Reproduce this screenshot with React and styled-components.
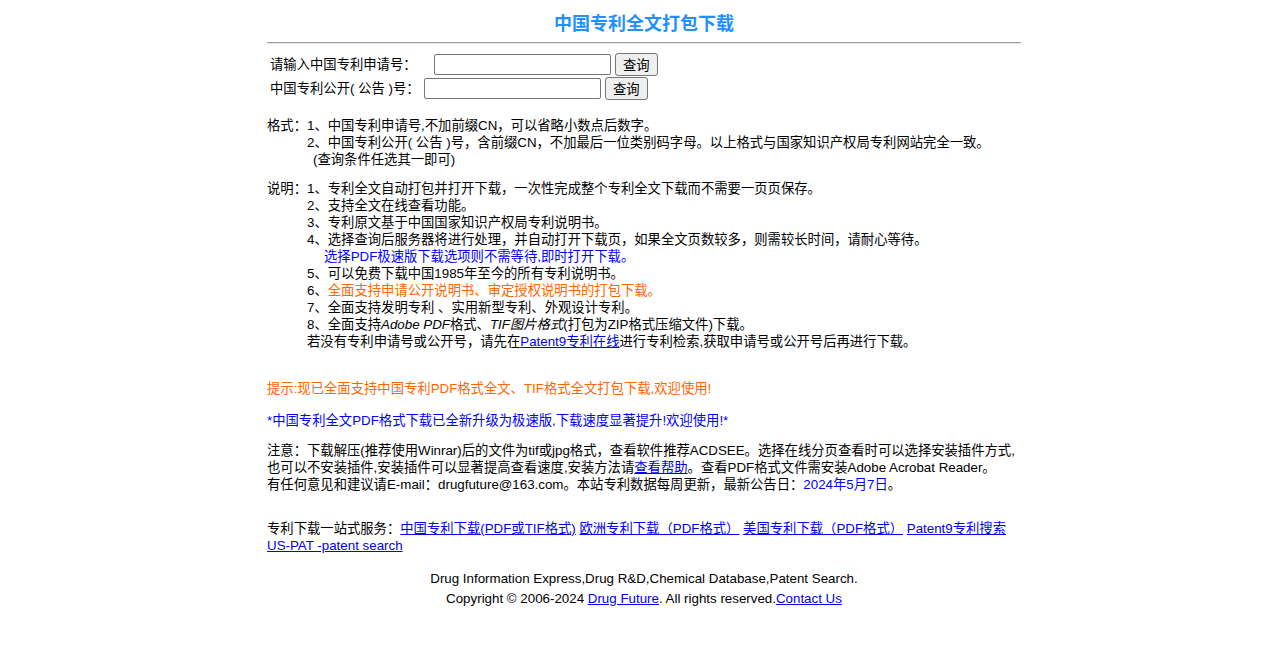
import React from 'react';
import styled, { createGlobalStyle } from 'styled-components';

const GlobalStyle = createGlobalStyle`
  body {
    margin: 0;
    background: #fff;
    color: #000;
    font-family: "Liberation Sans", "Noto Sans CJK SC", sans-serif;
    font-size: 10pt;
  }
`;

const Page = styled.div`
  width: 754px;
  margin: 0 auto;
  padding-top: 12px;
`;

const Title = styled.h1`
  margin: 0;
  font-size: 18px;
  line-height: 24px;
  font-weight: bold;
  color: #1e90ff;
  text-align: center;
`;

const Rule = styled.div`
  margin: 6px 0 9px;
  border-top: 1px solid #a0a0a0;
  border-bottom: 1px solid #e6e6e6;
`;

const Form = styled.div`
  display: flex;
  flex-direction: column;
  gap: 1px;
  padding-left: 3px;
`;

const FormRow = styled.div`
  display: flex;
  align-items: center;
  height: 23px;
`;

const Label = styled.span`
  width: ${(p) => p.$w}px;
  line-height: 17px;
`;

const Input = styled.input`
  box-sizing: border-box;
  width: 177px;
  height: 21px;
  margin: 0 4px 0 0;
  padding: 1px 2px;
  border: 1px solid #767676;
  border-radius: 2px;
  background: #fff;
`;

const Button = styled.button`
  box-sizing: border-box;
  height: 23px;
  padding: 0 7px;
  margin: 0;
  border: 1px solid #767676;
  border-radius: 3px;
  background: #efefef;
  font-family: "Liberation Sans", "Noto Sans CJK SC", sans-serif;
  font-size: 10pt;
  color: #000;
`;

const Section = styled.div`
  display: grid;
  grid-template-columns: 40px 1fr;
  line-height: 17px;
  margin-top: ${(p) => p.$top}px;
`;

const Items = styled.div`
  display: flex;
  flex-direction: column;
`;

const Line = styled.div`
  padding-left: ${(p) => p.$indent || 0}px;
  color: ${(p) => p.$color || 'inherit'};
`;

const Para = styled.div`
  line-height: 17px;
  margin-top: ${(p) => p.$top}px;
  color: ${(p) => p.$color || 'inherit'};
`;

const Link = styled.a`
  color: #0000ee;
  text-decoration: underline;
`;

const Blue = styled.span`
  color: #0000ff;
`;

const Orange = styled.span`
  color: #ff6600;
`;

const Footer = styled.div`
  margin-top: 15px;
  text-align: center;
  line-height: 20px;
  font-family: "Liberation Sans", Arial, sans-serif;
  font-size: 10pt;
`;

export default function App() {
  return (
    <>
      <GlobalStyle />
      <Page>
        <Title>中国专利全文打包下载</Title>
        <Rule />
        <Form>
          <FormRow>
            <Label $w={164}>请输入中国专利申请号：</Label>
            <Input type="text" />
            <Button>查询</Button>
          </FormRow>
          <FormRow>
            <Label $w={154}>中国专利公开( 公告 )号：</Label>
            <Input type="text" />
            <Button>查询</Button>
          </FormRow>
        </Form>

        <Section $top={17}>
          <span>格式：</span>
          <Items>
            <Line>1、中国专利申请号,不加前缀CN，可以省略小数点后数字。</Line>
            <Line>2、中国专利公开( 公告 )号，含前缀CN，不加最后一位类别码字母。以上格式与国家知识产权局专利网站完全一致。</Line>
            <Line $indent={6}>(查询条件任选其一即可)</Line>
          </Items>
        </Section>

        <Section $top={12}>
          <span>说明：</span>
          <Items>
            <Line>1、专利全文自动打包并打开下载，一次性完成整个专利全文下载而不需要一页页保存。</Line>
            <Line>2、支持全文在线查看功能。</Line>
            <Line>3、专利原文基于中国国家知识产权局专利说明书。</Line>
            <Line>4、选择查询后服务器将进行处理，并自动打开下载页，如果全文页数较多，则需较长时间，请耐心等待。</Line>
            <Line $indent={17} $color="#0000ff">选择PDF极速版下载选项则不需等待,即时打开下载。</Line>
            <Line>5、可以免费下载中国1985年至今的所有专利说明书。</Line>
            <Line>6、<Orange>全面支持申请公开说明书、审定授权说明书的打包下载。</Orange></Line>
            <Line>7、全面支持发明专利 、实用新型专利、外观设计专利。</Line>
            <Line>8、全面支持<i>Adobe PDF</i>格式、<i>TIF图片格式</i>(打包为ZIP格式压缩文件)下载。</Line>
            <Line>若没有专利申请号或公开号，请先在<Link href="#">Patent9专利在线</Link>进行专利检索,获取申请号或公开号后再进行下载。</Line>
          </Items>
        </Section>

        <Para $top={30} $color="#ff6600">提示:现已全面支持中国专利PDF格式全文、TIF格式全文打包下载,欢迎使用!</Para>
        <Para $top={15} $color="#0000ff">*中国专利全文PDF格式下载已全新升级为极速版,下载速度显著提升!欢迎使用!*</Para>
        <Para $top={13}>
          注意：下载解压(推荐使用Winrar)后的文件为tif或jpg格式，查看软件推荐ACDSEE。选择在线分页查看时可以选择安装插件方式,也可以不安装插件,安装插件可以显著提高查看速度,安装方法请<Link href="#">查看帮助</Link>。查看PDF格式文件需安装Adobe Acrobat Reader。
          <br />
          有任何意见和建议请E-mail：drugfuture@163.com。本站专利数据每周更新，最新公告日：<Blue>2024年5月7日</Blue>。
        </Para>
        <Para $top={27}>
          专利下载一站式服务：<Link href="#">中国专利下载(PDF或TIF格式)</Link> <Link href="#">欧洲专利下载（PDF格式）</Link> <Link href="#">美国专利下载（PDF格式）</Link> <Link href="#">Patent9专利搜索</Link> <Link href="#">US-PAT -patent search</Link>
        </Para>
        <Footer>
          Drug Information Express,Drug R&amp;D,Chemical Database,Patent Search.
          <br />
          Copyright © 2006-2024 <Link href="#">Drug Future</Link>. All rights reserved.<Link href="#">Contact Us</Link>
        </Footer>
      </Page>
    </>
  );
}
